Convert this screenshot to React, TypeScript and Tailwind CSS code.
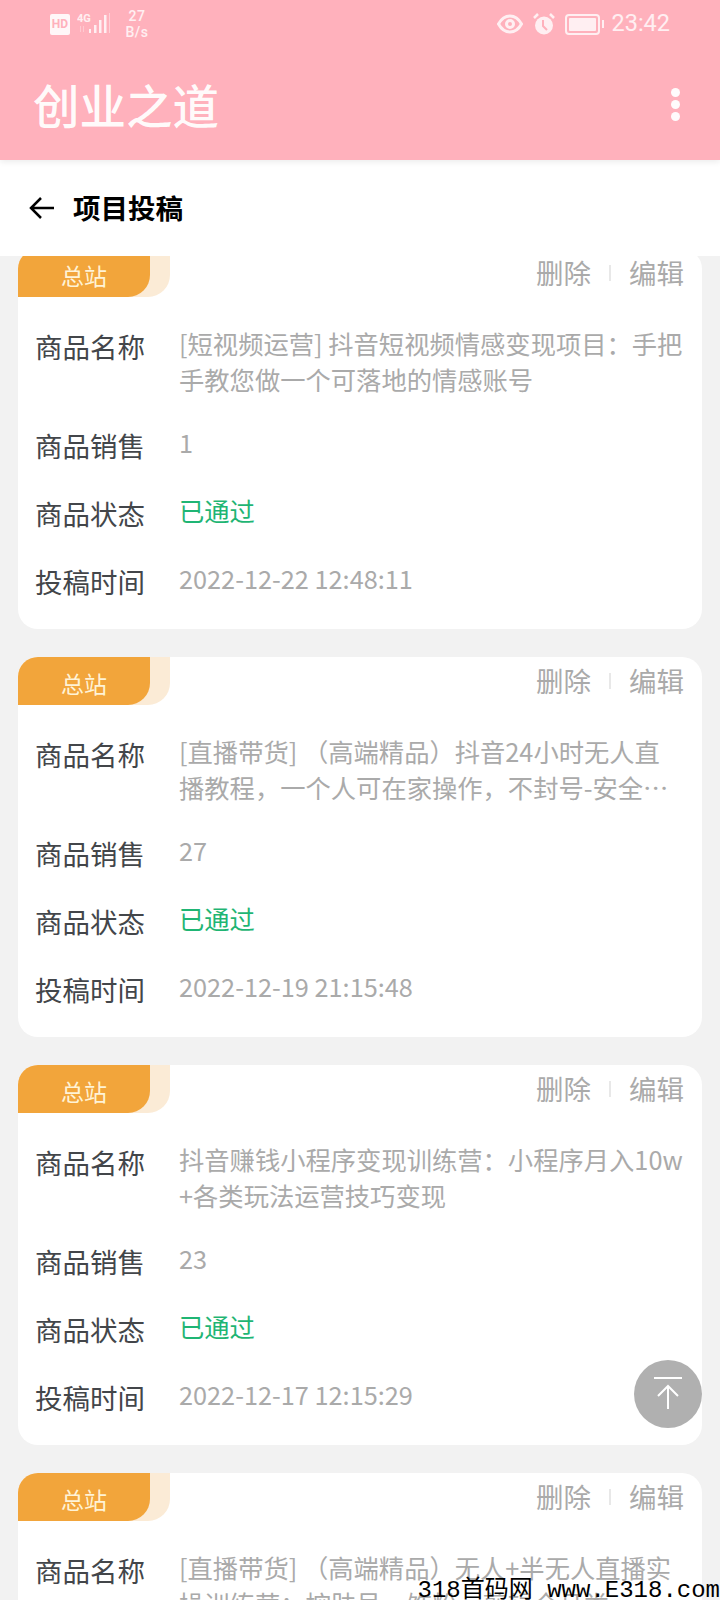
const cjk = "font-['Noto_Sans_CJK_SC',sans-serif]";

const items = [
  {
    name: ["[短视频运营] 抖音短视频情感变现项目：手把", "手教您做一个可落地的情感账号"],
    sales: "1",
    time: "2022-12-22 12:48:11",
  },
  {
    name: ["[直播带货] （高端精品）抖音24小时无人直", "播教程，一个人可在家操作，不封号-安全…"],
    sales: "27",
    time: "2022-12-19 21:15:48",
  },
  {
    name: ["抖音赚钱小程序变现训练营：小程序月入10w", "+各类玩法运营技巧变现"],
    sales: "23",
    time: "2022-12-17 12:15:29",
  },
  {
    name: ["[直播带货] （高端精品）无人+半无人直播实", "操训练营：控肤号，饰粉，剪辑全品类…"],
    sales: "18",
    time: "2022-12-15 10:21:36",
  },
];

const StatusBar = () => (
  <div className="flex h-[48px] items-center justify-between px-[50px] text-white/80">
    <div className="flex items-center">
      <div className="flex h-[21px] w-[20px] items-center justify-center rounded-[2px] bg-white/90 font-['Roboto',sans-serif] text-[12px] font-bold leading-none text-[#ffb1bc]">
        HD
      </div>
      <svg width="36" height="26" viewBox="0 0 36 26" className="ml-[7px]" fill="currentColor">
        <text x="0" y="11" fontSize="11" fontWeight="700" fontFamily="Roboto">4G</text>
        <rect x="12" y="18" width="2" height="4" />
        <rect x="17" y="14" width="2.5" height="8" />
        <rect x="22" y="9" width="2.5" height="13" />
        <rect x="27" y="4" width="2.5" height="18" />
        <rect x="32" y="2" width="1" height="20" opacity="0.5" />
        <rect x="3" y="15" width="1" height="6" opacity="0.4" />
        <rect x="6" y="15" width="1" height="6" opacity="0.4" />
      </svg>
      <div className="ml-[13px] flex w-[22px] flex-col items-center font-['Roboto',sans-serif] text-[14px] font-medium leading-[16px] tracking-[0.5px]">
        <span>27</span>
        <span>B/s</span>
      </div>
    </div>
    <div className="flex items-center">
      <svg width="26" height="20" viewBox="0 0 26 20" fill="none" stroke="currentColor">
        <path d="M1.5 10C4.5 4.500 8.500 2 13 2S21.500 4.500 24.500 10C21.500 15.500 17.500 18 13 18S4.500 15.500 1.500 10Z" strokeWidth="3" />
        <circle cx="13" cy="10" r="3.500" strokeWidth="3" />
      </svg>
      <svg width="24" height="24" viewBox="0 0 24 24" className="ml-[9px]" fill="currentColor">
        <circle cx="12" cy="13.500" r="9" />
        <path d="M11 8v6l4 4" stroke="#ffb1bc" strokeWidth="2" fill="none" />
        <path d="M2 6l4-4M22 6l-4-4" stroke="currentColor" strokeWidth="2.500" />
      </svg>
      <div className="ml-[9px] flex h-[21px] w-[35px] items-center justify-center rounded-[4px] border-2 border-white/80">
        <div className="h-[13px] w-[27px] rounded-[1px] bg-white/80" />
      </div>
      <div className="ml-[2px] h-[8px] w-[2px] bg-white/80" />
      <span className="ml-[7px] font-['Roboto',sans-serif] text-[23.5px] leading-none">23:42</span>
    </div>
  </div>
);

const Row = ({ label, children }: { label: string; children: React.ReactNode }) => (
  <div className="flex h-[36px]">
    <div className="w-[144px] shrink-0 pt-[1px] text-[27.5px] leading-[36px] text-[#43464a]">{label}</div>
    <div className="min-w-0 flex-1 -translate-y-[2px] text-[25.3px] leading-[36px] text-[#aaaaaa]">{children}</div>
  </div>
);

const Card = ({ item }: { item: (typeof items)[number] }) => (
  <div className="h-[380px] overflow-hidden rounded-[20px] bg-white">
    <div className="flex h-[48px] justify-between">
      <div className="flex w-[152px] rounded-br-[22px] bg-[#fbebd6]">
        <div className="flex h-[48px] w-[132px] items-center justify-center rounded-br-[22px] bg-[#f2a53b] pt-[5px] text-[23px] leading-none text-[#fff3d6]">
          总站
        </div>
      </div>
      <div className="flex h-[48px] items-center pr-[18px] text-[27.5px] leading-none text-[#aaaaaa]">
        <span>删除</span>
        <span className="mx-[18px] h-[16px] w-[2px] bg-[#e8e8e8]" />
        <span>编辑</span>
      </div>
    </div>
    <div className="flex flex-col pl-[17px] pr-[18px] pt-[30px]">
      <div className="h-[99px]">
        <Row label="商品名称">
          {item.name.map((line) => (
            <div key={line} className="whitespace-nowrap">
              {line}
            </div>
          ))}
        </Row>
      </div>
      <div className="h-[68px]">
        <Row label="商品销售">{item.sales}</Row>
      </div>
      <div className="h-[68px]">
        <Row label="商品状态">
          <span className="text-[#1fb574]">已通过</span>
        </Row>
      </div>
      <Row label="投稿时间">{item.time}</Row>
    </div>
  </div>
);

export default function App() {
  return (
    <div className={`relative flex h-[1600px] w-[720px] flex-col overflow-hidden bg-[#f2f2f2] ${cjk}`}>
      <div className="relative z-20 h-[160px] bg-[#ffb1bc] shadow-[0_2px_6px_rgba(0,0,0,0.08)]">
        <StatusBar />
        <div className="flex h-[112px] items-center justify-between pl-[33px] pr-[47px]">
          <h1 className="text-[46.5px] font-medium leading-none text-white/95">创业之道</h1>
          <div className="mr-[-7px] flex flex-col gap-[3px]">
            <span className="h-[9px] w-[9px] rounded-full bg-white/95" />
            <span className="h-[9px] w-[9px] rounded-full bg-white/95" />
            <span className="h-[9px] w-[9px] rounded-full bg-white/95" />
          </div>
        </div>
      </div>
      <div className="relative z-10 flex h-[96px] shrink-0 items-center bg-white pl-[28px]">
        <svg width="28" height="28" viewBox="0 0 28 28" fill="none" stroke="#000" strokeWidth="2.5">
          <path d="M26 14H3M13 4L3 14l10 10" />
        </svg>
        <span className="ml-[17px] text-[27.5px] font-bold leading-none text-black">项目投稿</span>
      </div>
      <div className="min-h-0 flex-1 overflow-hidden">
        <div className="-mt-[7px] flex flex-col gap-[28px] px-[18px]">
          {items.map((item) => (
            <Card key={item.time} item={item} />
          ))}
        </div>
      </div>
      <div className="absolute left-[634px] top-[1360px] flex h-[68px] w-[68px] items-center justify-center rounded-full bg-[#b0b0b0]">
        <svg width="32" height="36" viewBox="0 0 32 36" fill="none" stroke="#fff" strokeWidth="2">
          <path d="M2 2h28M16 33V10M6 20l10-10 10 10" />
        </svg>
      </div>
      <div className="absolute bottom-[-3px] right-0 whitespace-pre font-['Liberation_Mono','Noto_Sans_CJK_SC',monospace] text-[24px] leading-[24px] text-black">
        318首码网 www.E318.com
      </div>
    </div>
  );
}
